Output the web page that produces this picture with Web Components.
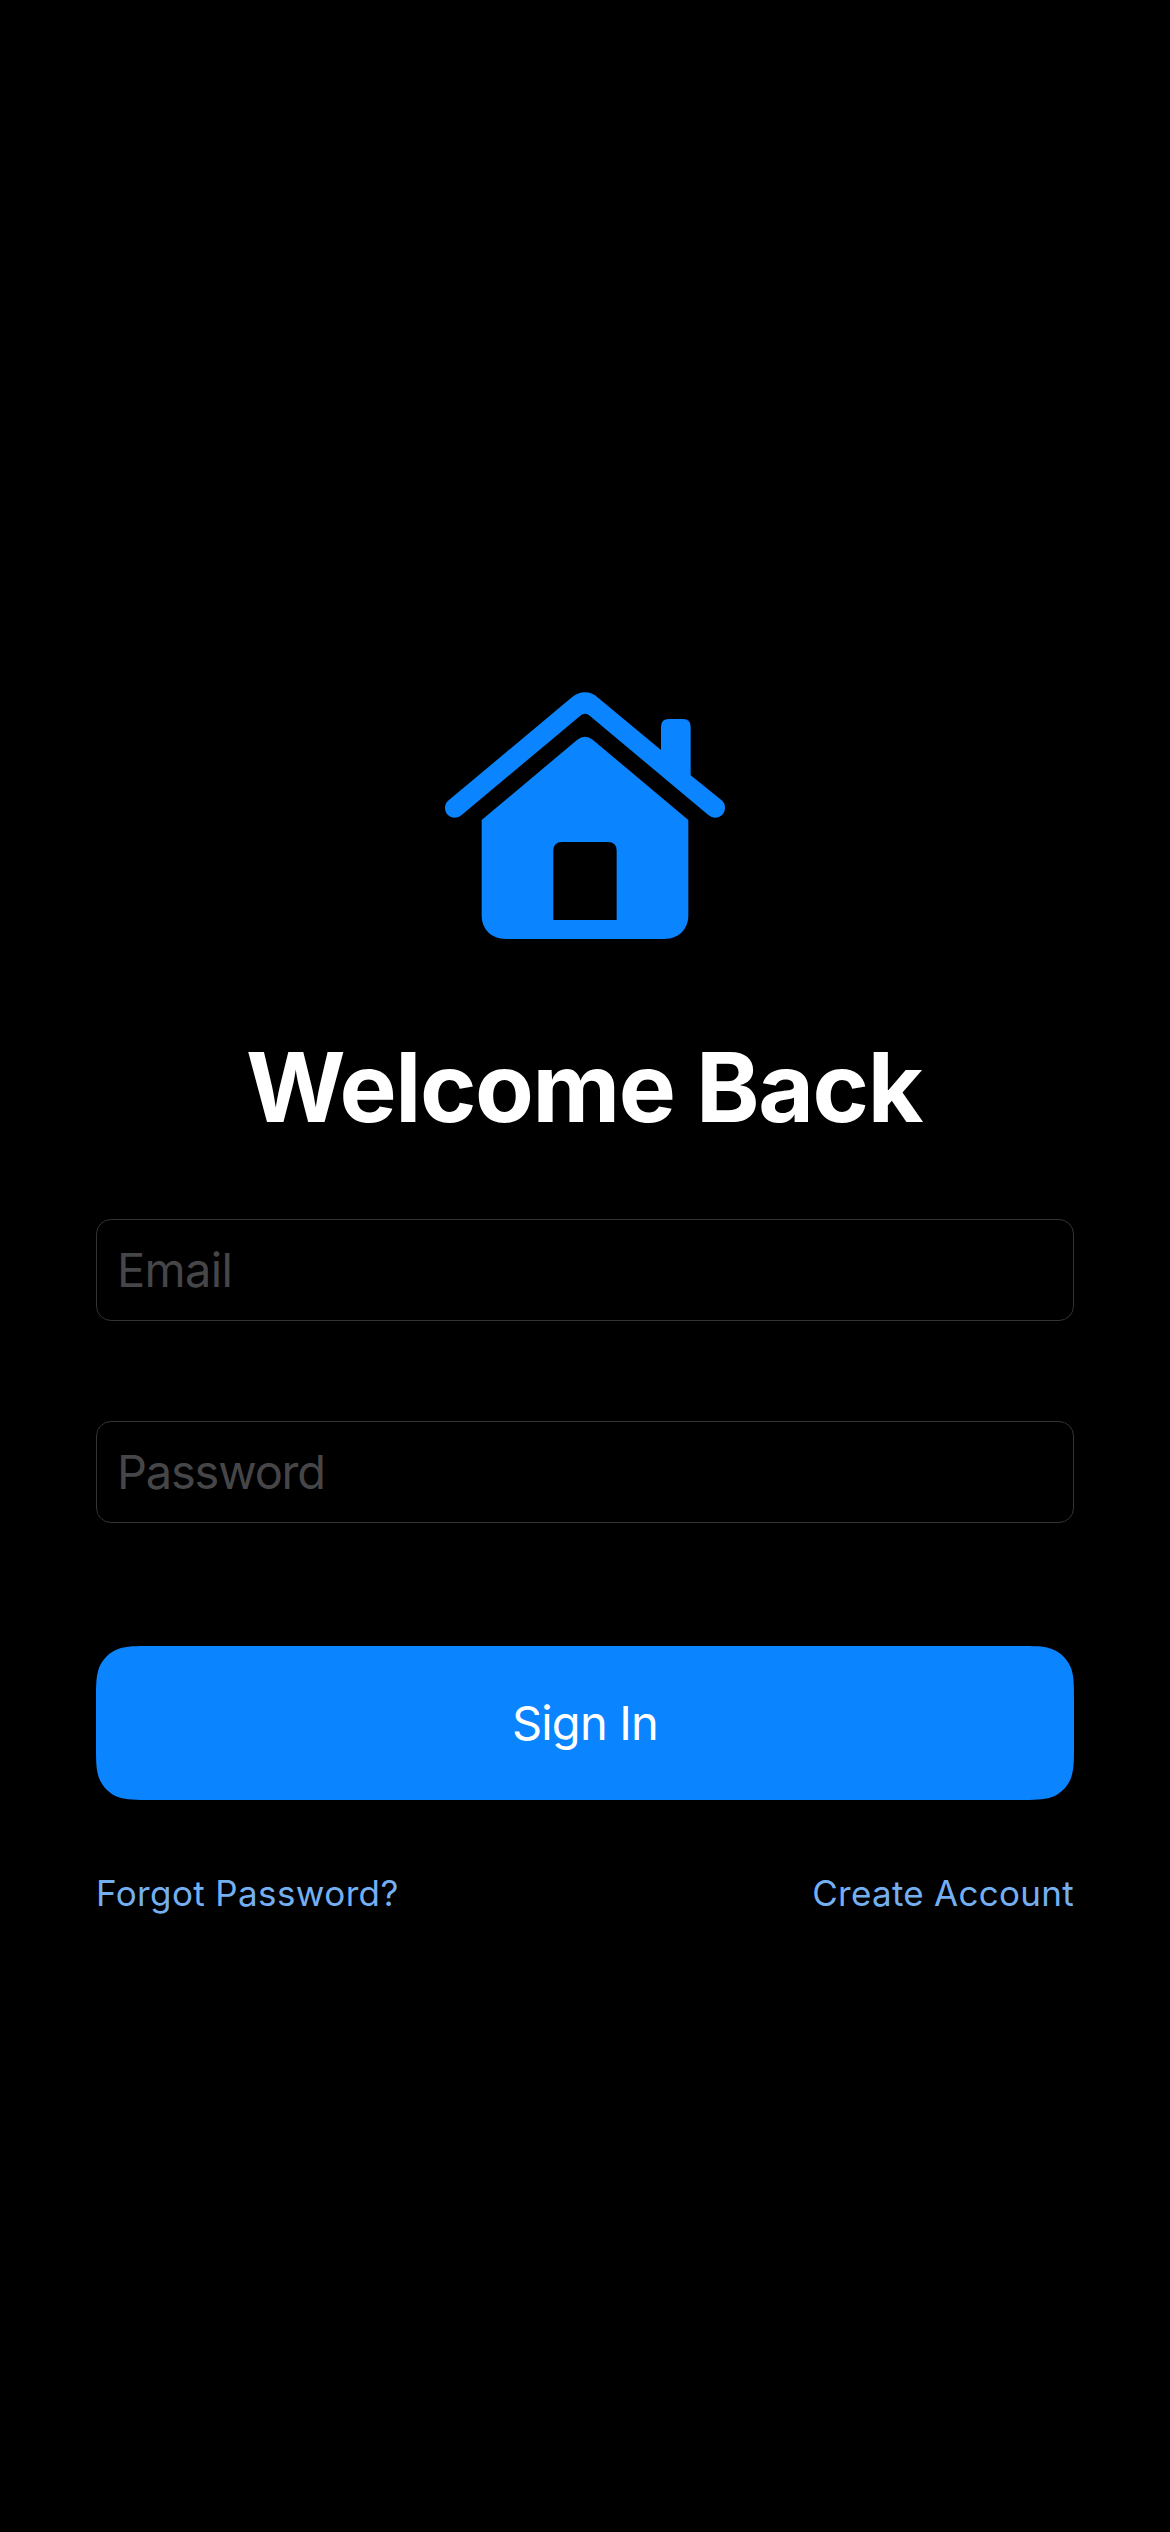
<!DOCTYPE html>
<html lang="en">
<head>
<meta charset="utf-8">
<title>Welcome Back</title>
<style>
html, body { margin: 0; background: #000; }
body { font-family: Inter, "Liberation Sans", sans-serif; color: #fff; }
</style>
</head>
<body>
<sign-in-screen>
  <house-logo></house-logo>
  <screen-title>Welcome Back</screen-title>
  <text-field>Email</text-field>
  <text-field style="--tracking: -1.2px">Password</text-field>
  <primary-button>Sign In</primary-button>
  <link-row>
    <text-link>Forgot Password?</text-link>
    <text-link style="--tracking: .28px">Create Account</text-link>
  </link-row>
</sign-in-screen>
<script>
const define = (name, html) => customElements.define(name, class extends HTMLElement {
  constructor() {
    super();
    this.attachShadow({ mode: 'open' }).innerHTML = html;
  }
});

define('sign-in-screen', `
<style>
  :host { display: flex; flex-direction: column; box-sizing: border-box; width: 1170px; height: 2532px; padding: 692px 96px 0; background: #000; overflow: hidden; }
  ::slotted(house-logo) { align-self: center; }
  ::slotted(screen-title) { margin: 90px 0 74px; }
  ::slotted(text-field) { margin-bottom: 100px; }
  ::slotted(primary-button) { margin-top: 23px; }
  ::slotted(link-row) { margin-top: 72px; }
</style>
<slot></slot>`);

define('house-logo', `
<style>:host { display: block; width: 280px; height: 247px; } svg { display: block; }</style>
<svg width="280" height="247" viewBox="45 36 840 741" fill="#0a84ff" aria-hidden="true">
  <path d="M56 361L423 54Q442 37 465 37T505 54L693 210V140Q693 117 716 117H759Q782 117 782 140V286L875 361Q885 370 885 383C885 400 872 413 855 413Q844 413 835 405L480 108Q465 95 450 108L95 405Q86 413 75 413C58 413 45 400 45 383Q45 370 56 361Z"/>
  <path fill-rule="evenodd" d="M155 420L441 180Q465 160 489 180L775 420V706C775 749 745 777 703 777H228C185 777 155 749 155 706ZM370 720H560V512Q560 486 534 486H396Q370 486 370 512Z"/>
</svg>`);

define('screen-title', `
<style>:host { display: block; padding-right: 2px; text-align: center; font-size: 96px; font-weight: 700; line-height: 116px; letter-spacing: -1.35px; white-space: nowrap; }</style>
<slot></slot>`);

define('text-field', `
<style>:host { display: flex; align-items: center; box-sizing: border-box; height: 102px; padding: 0 20px; border: 1px solid #343436; border-radius: 15px; color: #464649; font-size: 47px; line-height: 58px; letter-spacing: var(--tracking, -.67px); }</style>
<slot></slot>`);

define('primary-button', `
<style>:host { display: flex; align-items: center; justify-content: center; width: 978px; height: 154px; background: #0a84ff; color: #fff; font-size: 47px; line-height: 58px; letter-spacing: -.8px;
  clip-path: path("M55 0H923C938.8 0 946.7 0 953.9 2.4L955.3 2.7C964.6 6.1 971.9 13.4 975.3 22.7C978 31.3 978 39.2 978 55V99C978 114.8 978 122.7 975.3 131.3C971.9 140.6 964.6 147.9 955.3 151.3C946.7 154 938.8 154 923 154H55C39.2 154 31.3 154 22.7 151.3C13.4 147.9 6.1 140.6 2.7 131.3C0 122.7 0 114.8 0 99V55C0 39.2 0 31.3 2.7 22.7C6.1 13.4 13.4 6.1 22.7 2.7C31.3 0 39.2 0 55 0Z"); }</style>
<slot></slot>`);

define('link-row', `
<style>:host { display: flex; justify-content: space-between; }</style>
<slot></slot>`);

define('text-link', `
<style>:host { display: block; color: #74aff2; font-size: 35px; line-height: 42px; letter-spacing: var(--tracking, .39px); white-space: nowrap; }</style>
<slot></slot>`);
</script>
</body>
</html>
